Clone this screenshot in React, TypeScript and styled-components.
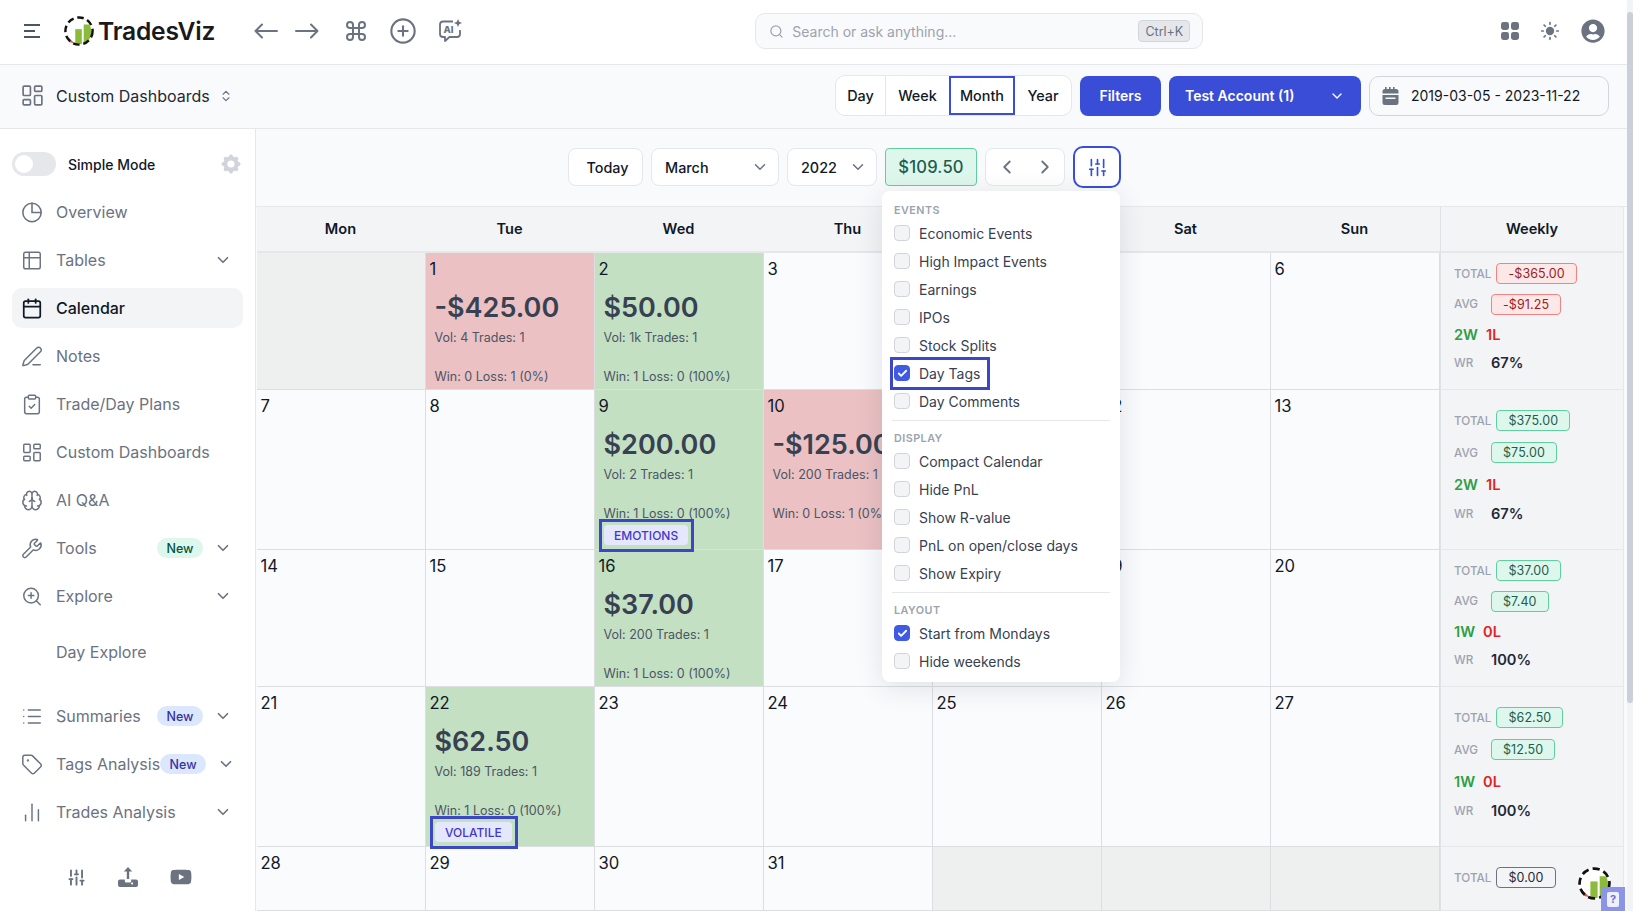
import React from 'react'
import styled, { createGlobalStyle } from 'styled-components'
import {
  Brain,
  Calendar,
  Check,
  ChevronDown,
  ChevronLeft,
  ChevronRight,
  ChevronsUpDown,
  ChartNoAxesColumn,
  CirclePlus,
  ClipboardCheck,
  Command,
  LayoutDashboard,
  List,
  PenLine,
  Search,
  SlidersVertical,
  Sun,
  Table2,
  Tag,
  Wrench,
  ZoomIn,
} from 'lucide-react'
import { FaUserCircle, FaYoutube } from 'react-icons/fa'
import { HiCog } from 'react-icons/hi'

const BLUE = '#3a4dd6'
const GREY = '#6b7280'

const GlobalStyle = createGlobalStyle`
  html, body {
    margin: 0;
    height: 100%;
    overflow: hidden;
    background: #fff;
    font-family: Inter, "Liberation Sans", sans-serif;
    color: #111827;
  }
  * {
    box-sizing: border-box;
  }
`

const Frame = styled.div`
  display: flex;
  height: 911px;
  overflow: hidden;
`

const Page = styled.div`
  flex: 1;
  min-width: 0;
  display: flex;
  flex-direction: column;
`

const ScrollRail = styled.div`
  width: 6px;
  padding-top: 12px;
  background: #f1f3f5;
`

const ScrollThumb = styled.div`
  height: 691px;
  background: #cbd0d8;
  border-radius: 3px;
`

/* top bar */
const TopBar = styled.header`
  height: 65px;
  flex: none;
  display: flex;
  align-items: center;
  padding: 0 22px 2px 24px;
  background: #fff;
  border-bottom: 1px solid #e5e7eb;
`

const Brand = styled.div`
  display: flex;
  align-items: center;
  gap: 4px;
  margin-left: 23px;
  font-size: 24.6px;
  font-weight: 600;
  letter-spacing: -0.2px;
  color: #1a1a1a;
`

const NavIcons = styled.div`
  display: flex;
  align-items: center;
  margin-left: 39px;
  color: ${GREY};
`

const IconSlot = styled.span<{ $gap?: number }>`
  display: inline-flex;
  margin-left: ${(p) => p.$gap ?? 0}px;
`

const SearchBox = styled.div`
  width: 448px;
  height: 36px;
  margin-left: 292px;
  display: flex;
  align-items: center;
  padding: 0 12px 0 13px;
  background: #f9fafb;
  border: 1px solid #e5e7eb;
  border-radius: 10px;
  color: #9ca3af;
  font-size: 14px;
`

const SearchText = styled.span`
  margin-left: 8px;
  flex: 1;
`

const Kbd = styled.span`
  height: 22px;
  padding: 0 6px;
  display: inline-flex;
  align-items: center;
  background: #e5e7eb;
  border: 1px solid #d1d5db;
  border-radius: 4px;
  color: ${GREY};
  font-size: 12.5px;
`

const RightIcons = styled.div`
  margin-left: auto;
  display: flex;
  align-items: center;
  gap: 21px;
  color: ${GREY};
`

/* second bar */
const SubBar = styled.div`
  height: 64px;
  flex: none;
  display: flex;
  align-items: center;
  padding: 0 18px 2px 20px;
  background: #f9fafb;
  border-bottom: 1px solid #e5e7eb;
`

const DashTitle = styled.div`
  display: flex;
  align-items: center;
  font-size: 16px;
  color: #1f2937;
  svg:first-child {
    color: ${GREY};
    margin-right: 11px;
  }
  svg:last-child {
    color: ${GREY};
    margin-left: 9px;
  }
`

const BarActions = styled.div`
  margin-left: auto;
  display: flex;
  align-items: center;
  gap: 8px;
`

const Segments = styled.div`
  display: flex;
  height: 41px;
  background: #fff;
  border: 1px solid #e5e7eb;
  border-radius: 10px;
  overflow: hidden;
`

const Segment = styled.div<{ $width: number; $active?: boolean; $split?: boolean }>`
  width: ${(p) => p.$width}px;
  display: flex;
  align-items: center;
  justify-content: center;
  font-size: 14.4px;
  font-weight: 500;
  color: #111827;
  border: ${(p) => (p.$active ? `2px solid ${BLUE}` : 'none')};
  border-right: ${(p) => (p.$split ? '1px solid #e5e7eb' : p.$active ? `2px solid ${BLUE}` : 'none')};
`

const PrimaryButton = styled.div<{ $width: number; $center?: boolean }>`
  width: ${(p) => p.$width}px;
  height: 40px;
  padding: 0 16px;
  display: flex;
  align-items: center;
  justify-content: ${(p) => (p.$center ? 'center' : 'space-between')};
  background: ${BLUE};
  border-radius: 8px;
  color: #fff;
  font-size: 14px;
  font-weight: 600;
`

const DateBox = styled.div`
  width: 240px;
  height: 40px;
  display: flex;
  align-items: center;
  gap: 12px;
  padding-left: 12px;
  background: #f9fafb;
  border: 1px solid #d1d5db;
  border-radius: 10px;
  font-size: 14px;
  color: #111827;
`

/* sidebar */
const Body = styled.div`
  flex: 1;
  min-height: 0;
  display: flex;
`

const Sidebar = styled.aside`
  width: 256px;
  flex: none;
  padding: 23px 12px 0;
  background: #fff;
  border-right: 1px solid #e5e7eb;
`

const ModeRow = styled.div`
  display: flex;
  align-items: center;
  height: 24px;
  margin-bottom: 16px;
  font-size: 14px;
  font-weight: 500;
  color: #111827;
`

const Toggle = styled.span`
  width: 44px;
  height: 24px;
  padding: 3px;
  margin-right: 12px;
  background: #e5e7eb;
  border-radius: 12px;
  span {
    display: block;
    width: 18px;
    height: 18px;
    background: #fff;
    border-radius: 50%;
  }
`

const Gear = styled(HiCog)`
  margin-left: auto;
  color: #d1d5db;
`

const NavList = styled.nav`
  display: flex;
  flex-direction: column;
  gap: 8px;
`

const NavItem = styled.div<{ $active?: boolean; $plain?: boolean }>`
  height: 40px;
  display: flex;
  align-items: center;
  padding: 0 11px 0 9px;
  border-radius: 10px;
  background: ${(p) => (p.$active ? '#f3f4f6' : 'transparent')};
  color: ${(p) => (p.$active ? '#111827' : GREY)};
  font-size: 16px;
  font-weight: ${(p) => (p.$active ? 500 : 400)};
  margin: ${(p) => (p.$plain ? '8px 0 16px' : '0')};
  padding-left: ${(p) => (p.$plain ? '44px' : '9px')};
  white-space: nowrap;
`

const NavIcon = styled.span`
  width: 22px;
  flex: none;
  margin-right: 13px;
  display: inline-flex;
  justify-content: center;
`

const NewBadge = styled.span<{ $tone: 'green' | 'blue' }>`
  height: 20px;
  width: 46px;
  flex: none;
  margin-left: auto;
  display: inline-flex;
  align-items: center;
  justify-content: center;
  border-radius: 10px;
  font-size: 12.5px;
  font-weight: 500;
  background: ${(p) => (p.$tone === 'green' ? '#def7ec' : '#dbe7fd')};
  color: ${(p) => (p.$tone === 'green' ? '#03543f' : '#3730a3')};
`

const Chevron = styled(ChevronDown)<{ $pushed: boolean }>`
  flex: none;
  margin-left: ${(p) => (p.$pushed ? '11px' : 'auto')};
  color: ${GREY};
`

const SideFooter = styled.div`
  display: flex;
  justify-content: center;
  align-items: center;
  gap: 32px;
  margin-top: 34px;
  color: ${GREY};
  padding-left: 3px;
`

/* calendar */
const Main = styled.main`
  flex: 1;
  min-width: 0;
  display: flex;
  flex-direction: column;
  background: #f9fafb;
`

const Toolbar = styled.div`
  height: 77px;
  flex: none;
  display: flex;
  align-items: center;
  justify-content: center;
  gap: 8px;
  padding: 0 194px 1px 0;
`

const ToolButton = styled.div<{ $width: number; $center?: boolean }>`
  width: ${(p) => p.$width}px;
  height: 38px;
  padding: 0 9px 0 13px;
  display: flex;
  align-items: center;
  justify-content: ${(p) => (p.$center ? 'center' : 'space-between')};
  background: #fff;
  border: 1px solid #e5e7eb;
  border-radius: 8px;
  font-size: 14.4px;
  font-weight: 500;
  color: #111827;
  svg {
    color: ${GREY};
  }
`

const StepButtons = styled(ToolButton)`
  padding: 0 8px 0 10px;
`

const TotalChip = styled.div`
  width: 92px;
  height: 38px;
  display: flex;
  align-items: center;
  justify-content: center;
  background: #def7ec;
  border: 1px solid #5fcf9f;
  border-radius: 4px;
  font-size: 16.6px;
  font-weight: 500;
  letter-spacing: 0.2px;
  color: #1f5d4c;
`

const OptionsAnchor = styled.div`
  position: relative;
`

const OptionsButton = styled.div`
  width: 48px;
  height: 42px;
  display: flex;
  align-items: center;
  justify-content: center;
  background: #fff;
  border: 2px solid ${BLUE};
  border-radius: 10px;
  color: ${BLUE};
`

const OptionsMenu = styled.div`
  position: absolute;
  top: 45px;
  right: 1px;
  z-index: 5;
  width: 238px;
  height: 491px;
  padding: 12px 10px 0 12px;
  background: #fff;
  border-radius: 8px;
  box-shadow: 0 6px 28px rgba(31, 41, 55, 0.12);
`

const MenuHeading = styled.div`
  height: 14px;
  display: flex;
  align-items: center;
  margin-bottom: 2px;
  font-size: 10.8px;
  font-weight: 600;
  letter-spacing: 0.45px;
  color: #9ca3af;
`

const MenuRow = styled.div`
  height: 28px;
  display: flex;
  align-items: center;
  font-size: 14px;
  color: #374151;
`

const Box = styled.span<{ $on?: boolean }>`
  width: 16px;
  height: 16px;
  flex: none;
  margin-right: 9px;
  display: inline-flex;
  align-items: center;
  justify-content: center;
  border-radius: 4px;
  background: ${(p) => (p.$on ? '#3f5be4' : '#f3f4f6')};
  border: 1px solid ${(p) => (p.$on ? '#3f5be4' : '#d1d5db')};
  color: #fff;
`

const MenuMark = styled.span`
  position: relative;
  display: flex;
  align-items: center;
  height: 100%;
  &::after {
    content: '';
    position: absolute;
    left: -4px;
    right: -10px;
    top: -2px;
    bottom: -3px;
    border: 3px solid #3b47c6;
  }
`

const MenuRule = styled.div`
  height: 1px;
  margin: 5px 0 10px -2px;
  background: #e5e7eb;
`

const Grid = styled.div`
  flex: 1;
  min-height: 0;
  display: grid;
  grid-template-columns: repeat(7, 169px) 184px;
  grid-template-rows: 46px 137px 160px 137px 160px 1fr;
  padding: 0 3px 0 1px;
  border-top: 1px solid #e5e7eb;
`

const HeadCell = styled.div<{ $weekly?: boolean }>`
  display: flex;
  align-items: center;
  justify-content: center;
  padding-right: ${(p) => (p.$weekly ? '0' : '2px')};
  background: #f3f4f6;
  border-bottom: 2px solid #e5e7eb;
  border-left: ${(p) => (p.$weekly ? '1px solid #dfe1e4' : 'none')};
  border-right: ${(p) => (p.$weekly ? '1px solid #e5e7eb' : 'none')};
  font-size: 14.6px;
  font-weight: 600;
  color: #111827;
`

const CELL_BG = { none: '#fafbfd', out: '#eef0ef', win: '#c3e0c3', loss: '#ebc1c3' }

const DayCell = styled.div<{ $kind: keyof typeof CELL_BG }>`
  position: relative;
  padding: 6px 6px 0 3.5px;
  background: ${(p) => CELL_BG[p.$kind]};
  border-right: 1px solid #dcdee1;
  border-bottom: 1px solid #dcdee1;
  min-width: 0;
`

const DayNum = styled.div`
  height: 20px;
  line-height: 20px;
  font-size: 16.6px;
  color: #111827;
`

const Pnl = styled.div`
  margin-top: 9px;
  padding-left: 5px;
  height: 40px;
  line-height: 40px;
  font-size: 27px;
  font-weight: 600;
  color: #374151;
  white-space: nowrap;
`

const Meta = styled.div<{ $gap?: number }>`
  margin-top: ${(p) => p.$gap ?? 0}px;
  padding-left: 5px;
  height: 16px;
  line-height: 16px;
  font-size: 12.5px;
  color: #4b5563;
  white-space: nowrap;
`

const TagSlot = styled.div`
  position: absolute;
  bottom: -3px;
  left: 4px;
  z-index: 2;
  padding: 3px 3px 4px 2px;
  border: 3px solid #3b47c6;
`

const TagPill = styled.div`
  height: 20px;
  padding: 0 10px;
  display: flex;
  align-items: center;
  justify-content: center;
  background: #e5e7fd;
  border-radius: 4px;
  font-size: 12px;
  font-weight: 500;
  color: #4338ca;
`

const WeekCell = styled.div<{ $tall?: boolean }>`
  background: #f3f4f6;
  border-left: 1px solid #dfe1e4;
  border-right: 1px solid #e5e7eb;
  border-bottom: 1px solid #e5e7eb;
  padding: ${(p) => (p.$tall ? '20px' : '10px')} 0 0 13px;
  display: flex;
  flex-direction: column;
  gap: ${(p) => (p.$tall ? '11px' : '9.5px')};
`

const StatRow = styled.div<{ $pull?: number }>`
  height: 21px;
  display: flex;
  align-items: center;
  margin-top: ${(p) => -(p.$pull ?? 0)}px;
`

const StatLabel = styled.span`
  min-width: 32px;
  margin-right: 5px;
  font-size: 11.7px;
  font-weight: 500;
  color: #9ca3af;
`

const MoneyPill = styled.span<{ $tone: 'up' | 'down' | 'flat' }>`
  height: 21px;
  padding: 0 11px;
  display: inline-flex;
  align-items: center;
  border-radius: 4px;
  font-size: 12.5px;
  letter-spacing: 0.1px;
  background: ${(p) => (p.$tone === 'up' ? '#def7ec' : p.$tone === 'down' ? '#fde8e8' : 'transparent')};
  border: 1px solid ${(p) => (p.$tone === 'up' ? '#5fcf9f' : p.$tone === 'down' ? '#f98080' : GREY)};
  color: ${(p) => (p.$tone === 'up' ? '#1f5d4c' : p.$tone === 'down' ? '#9b1c1c' : '#1f2937')};
`

const Wins = styled.span`
  font-size: 14.6px;
  font-weight: 600;
  color: #2f9e44;
  margin-right: 8px;
`

const Losses = styled.span`
  font-size: 14.6px;
  font-weight: 600;
  color: #e02424;
`

const RateValue = styled.span`
  font-size: 14.6px;
  font-weight: 600;
  color: #1f2937;
`

const FloatLogo = styled.div`
  position: absolute;
  left: 1578px;
  top: 867px;
  z-index: 6;
  width: 33px;
  height: 33px;
  background: #fff;
  border-radius: 50%;
`

const HelpTab = styled.div`
  position: absolute;
  left: 1601px;
  top: 887px;
  z-index: 7;
  width: 24px;
  height: 24px;
  display: flex;
  align-items: center;
  justify-content: center;
  background: #8c94e8;
  span {
    width: 12px;
    height: 15px;
    background: #eef0fd;
    border-radius: 2px;
    color: #6a72d8;
    font-size: 11px;
    font-weight: 700;
    line-height: 15px;
    text-align: center;
  }
`

function Logo({ size }: { size: number }) {
  return (
    <svg width={size} height={size} viewBox="0 0 32 32">
      <path d="M3 21 L11 29 L6 28 Z" fill="#d9534f" />
      <rect x="12" y="14" width="7" height="16" fill="#8cbb3c" />
      <path d="M21 9 h6 q3 5 2 11 q-2 7 -8 10 Z" fill="#8cbb3c" />
      <circle
        cx="16"
        cy="16"
        r="14.5"
        fill="none"
        stroke="#111"
        strokeWidth="2.6"
        strokeDasharray="7 4"
      />
    </svg>
  )
}

function MenuIcon() {
  return (
    <svg width="17" height="16" viewBox="0 0 17 16" fill="none" stroke="#4b5563" strokeWidth="2">
      <path d="M0 2h16M0 8h11M0 14h16" />
    </svg>
  )
}

function LongArrow({ right }: { right?: boolean }) {
  return (
    <svg
      width="24"
      height="24"
      viewBox="0 0 24 24"
      fill="none"
      stroke="currentColor"
      strokeWidth="2"
      strokeLinecap="round"
      strokeLinejoin="round"
    >
      <path d={right ? 'M1 12H22.5M16 5.5l6.5 6.5-6.5 6.5' : 'M23 12H1.5M8 5.5 1.5 12 8 18.5'} />
    </svg>
  )
}

function AiChat() {
  return (
    <svg width="25" height="26" viewBox="0 0 25 26" fill="none" stroke="currentColor" strokeWidth="1.8">
      <path
        d="M15 3.5H5Q2 3.5 2 6.5V16Q2 19 5 19H7V23L11.5 19H19Q22 19 22 16V12"
        strokeLinejoin="round"
      />
      <path d="M20 1l1.2 2.8L24 5l-2.8 1.2L20 9l-1.2-2.8L16 5l2.8-1.2z" fill="currentColor" stroke="none" />
      <text x="5.5" y="15" fontSize="9.5" fontWeight="800" fill="currentColor" stroke="none" fontFamily="Inter">
        AI
      </text>
    </svg>
  )
}

function OverviewPie() {
  return (
    <svg width="25" height="25" viewBox="0 0 24 24" fill="none" stroke="currentColor" strokeWidth="1.7" strokeLinecap="round">
      <circle cx="12" cy="12" r="10" />
      <path d="M12 2v10h10" />
    </svg>
  )
}

function GridDots() {
  return (
    <svg width="18" height="18" viewBox="0 0 18 18" fill="currentColor">
      <rect width="8" height="8" rx="2.4" />
      <rect x="10" width="8" height="8" rx="2.4" />
      <rect y="10" width="8" height="8" rx="2.4" />
      <rect x="10" y="10" width="8" height="8" rx="2.4" />
    </svg>
  )
}

function SolidCalendar() {
  return (
    <svg width="17" height="18" viewBox="0 0 17 18" fill={GREY}>
      <path d="M3 0h1.6v2H7V0h1.6v2H11V0h1.6v2H14a2.5 2.5 0 0 1 2.5 2.5V6.5H.5V4.5A2.5 2.5 0 0 1 3 2z" />
      <path d="M.5 8h16v7.5a2.5 2.5 0 0 1-2.5 2.5H3a2.5 2.5 0 0 1-2.5-2.5zM3.5 10.5v1.5h10v-1.5z" fillRule="evenodd" />
    </svg>
  )
}

function SolidUpload() {
  return (
    <svg width="20" height="20" viewBox="0 0 20 20" fill="currentColor">
      <path d="M10 0l4.2 4.6h-3V12H8.8V4.6h-3z" />
      <path d="M0 14.5A2 2 0 0 1 2 12.5h4.8V14a1.5 1.5 0 0 0 1.5 1.5h3.4A1.5 1.5 0 0 0 13.2 14v-1.5H18a2 2 0 0 1 2 2V18a2 2 0 0 1-2 2H2a2 2 0 0 1-2-2zM15 16.5a1 1 0 1 0 0 .01z" fillRule="evenodd" />
    </svg>
  )
}

type NavEntry = {
  label: string
  icon?: React.ReactNode
  active?: boolean
  badge?: 'green' | 'blue'
  chevron?: boolean
  plain?: boolean
}

const ICON = { size: 25, strokeWidth: 1.6 }

const NAV: NavEntry[] = [
  { label: 'Overview', icon: <OverviewPie /> },
  { label: 'Tables', icon: <Table2 {...ICON} />, chevron: true },
  { label: 'Calendar', icon: <Calendar {...ICON} color="#111827" strokeWidth={1.9} />, active: true },
  { label: 'Notes', icon: <PenLine {...ICON} /> },
  { label: 'Trade/Day Plans', icon: <ClipboardCheck {...ICON} /> },
  { label: 'Custom Dashboards', icon: <LayoutDashboard {...ICON} /> },
  { label: 'AI Q&A', icon: <Brain {...ICON} /> },
  { label: 'Tools', icon: <Wrench {...ICON} />, badge: 'green', chevron: true },
  { label: 'Explore', icon: <ZoomIn {...ICON} />, chevron: true },
  { label: 'Day Explore', plain: true },
  { label: 'Summaries', icon: <List {...ICON} />, badge: 'blue', chevron: true },
  { label: 'Tags Analysis', icon: <Tag {...ICON} />, badge: 'blue', chevron: true },
  { label: 'Trades Analysis', icon: <ChartNoAxesColumn {...ICON} />, chevron: true },
]

type Day = {
  num?: number
  kind?: 'none' | 'out' | 'win' | 'loss'
  pnl?: string
  vol?: string
  win?: string
  tag?: string
}

const WIN = 'Win: 1 Loss: 0 (100%)'
const LOSS = 'Win: 0 Loss: 1 (0%)'

const WEEKS: Day[][] = [
  [
    { kind: 'out' },
    { num: 1, kind: 'loss', pnl: '-$425.00', vol: 'Vol: 4 Trades: 1', win: LOSS },
    { num: 2, kind: 'win', pnl: '$50.00', vol: 'Vol: 1k Trades: 1', win: WIN },
    { num: 3 },
    { num: 4 },
    { num: 5 },
    { num: 6 },
  ],
  [
    { num: 7 },
    { num: 8 },
    { num: 9, kind: 'win', pnl: '$200.00', vol: 'Vol: 2 Trades: 1', win: WIN, tag: 'EMOTIONS' },
    { num: 10, kind: 'loss', pnl: '-$125.00', vol: 'Vol: 200 Trades: 1', win: LOSS },
    { num: 11 },
    { num: 12 },
    { num: 13 },
  ],
  [
    { num: 14 },
    { num: 15 },
    { num: 16, kind: 'win', pnl: '$37.00', vol: 'Vol: 200 Trades: 1', win: WIN },
    { num: 17 },
    { num: 18 },
    { num: 19 },
    { num: 20 },
  ],
  [
    { num: 21 },
    { num: 22, kind: 'win', pnl: '$62.50', vol: 'Vol: 189 Trades: 1', win: WIN, tag: 'VOLATILE' },
    { num: 23 },
    { num: 24 },
    { num: 25 },
    { num: 26 },
    { num: 27 },
  ],
  [
    { num: 28 },
    { num: 29 },
    { num: 30 },
    { num: 31 },
    { kind: 'out' },
    { kind: 'out' },
    { kind: 'out' },
  ],
]

const SUMMARY = [
  { total: '-$365.00', avg: '-$91.25', w: '2W', l: '1L', rate: '67%', tone: 'down' as const },
  { total: '$375.00', avg: '$75.00', w: '2W', l: '1L', rate: '67%', tone: 'up' as const, tall: true },
  { total: '$37.00', avg: '$7.40', w: '1W', l: '0L', rate: '100%', tone: 'up' as const },
  { total: '$62.50', avg: '$12.50', w: '1W', l: '0L', rate: '100%', tone: 'up' as const, tall: true },
]

const MENU = [
  {
    title: 'EVENTS',
    rows: [
      { label: 'Economic Events' },
      { label: 'High Impact Events' },
      { label: 'Earnings' },
      { label: 'IPOs' },
      { label: 'Stock Splits' },
      { label: 'Day Tags', on: true, marked: true },
      { label: 'Day Comments' },
    ],
  },
  {
    title: 'DISPLAY',
    rows: [
      { label: 'Compact Calendar' },
      { label: 'Hide PnL' },
      { label: 'Show R-value' },
      { label: 'PnL on open/close days' },
      { label: 'Show Expiry' },
    ],
  },
  {
    title: 'LAYOUT',
    rows: [{ label: 'Start from Mondays', on: true }, { label: 'Hide weekends' }],
  },
]

export default function App() {
  return (
    <Frame>
      <GlobalStyle />
      <Page>
        <TopBar>
          <MenuIcon />
          <Brand>
            <Logo size={30} />
            TradesViz
          </Brand>
          <NavIcons>
            <LongArrow />
            <IconSlot $gap={17}>
              <LongArrow right />
            </IconSlot>
            <IconSlot $gap={25}>
              <Command size={24} strokeWidth={2} />
            </IconSlot>
            <IconSlot $gap={21}>
              <CirclePlus size={28} strokeWidth={1.8} />
            </IconSlot>
            <IconSlot $gap={21}>
              <AiChat />
            </IconSlot>
          </NavIcons>
          <SearchBox>
            <Search size={15} />
            <SearchText>Search or ask anything...</SearchText>
            <Kbd>Ctrl+K</Kbd>
          </SearchBox>
          <RightIcons>
            <GridDots />
            <Sun size={20} fill={GREY} />
            <FaUserCircle size={24} />
          </RightIcons>
        </TopBar>

        <SubBar>
          <DashTitle>
            <LayoutDashboard size={25} strokeWidth={1.6} />
            Custom Dashboards
            <ChevronsUpDown size={14} />
          </DashTitle>
          <BarActions>
            <Segments>
              <Segment $width={50} $split>Day</Segment>
              <Segment $width={63}>Week</Segment>
              <Segment $width={66} $active>Month</Segment>
              <Segment $width={56}>Year</Segment>
            </Segments>
            <PrimaryButton $width={81} $center>Filters</PrimaryButton>
            <PrimaryButton $width={192}>
              Test Account (1)
              <ChevronDown size={16} />
            </PrimaryButton>
            <DateBox>
              <SolidCalendar />
              2019-03-05 - 2023-11-22
            </DateBox>
          </BarActions>
        </SubBar>

        <Body>
          <Sidebar>
            <ModeRow>
              <Toggle>
                <span />
              </Toggle>
              Simple Mode
              <Gear size={24} />
            </ModeRow>
            <NavList>
              {NAV.map((item) => (
                <NavItem key={item.label} $active={item.active} $plain={item.plain}>
                  {item.icon && <NavIcon>{item.icon}</NavIcon>}
                  {item.label}
                  {item.badge && <NewBadge $tone={item.badge}>New</NewBadge>}
                  {item.chevron && <Chevron size={18} strokeWidth={2.2} $pushed={!!item.badge} />}
                </NavItem>
              ))}
            </NavList>
            <SideFooter>
              <SlidersVertical size={19} strokeWidth={2.4} />
              <SolidUpload />
              <FaYoutube size={22} />
            </SideFooter>
          </Sidebar>

          <Main>
            <Toolbar>
              <ToolButton $width={75} $center>
                Today
              </ToolButton>
              <ToolButton $width={128}>
                March
                <ChevronDown size={18} />
              </ToolButton>
              <ToolButton $width={90}>
                2022
                <ChevronDown size={18} />
              </ToolButton>
              <TotalChip>$109.50</TotalChip>
              <StepButtons $width={80}>
                <ChevronLeft size={22} />
                <ChevronRight size={22} />
              </StepButtons>
              <OptionsAnchor>
                <OptionsButton>
                  <SlidersVertical size={21} strokeWidth={1.9} />
                </OptionsButton>
                <OptionsMenu>
                  {MENU.map((section, i) => (
                    <React.Fragment key={section.title}>
                      {i > 0 && <MenuRule />}
                      <MenuHeading>{section.title}</MenuHeading>
                      {section.rows.map((row) => {
                        const content = (
                          <>
                            <Box $on={row.on}>{row.on && <Check size={11} strokeWidth={4} />}</Box>
                            {row.label}
                          </>
                        )
                        return (
                          <MenuRow key={row.label}>
                            {'marked' in row ? <MenuMark>{content}</MenuMark> : content}
                          </MenuRow>
                        )
                      })}
                    </React.Fragment>
                  ))}
                </OptionsMenu>
              </OptionsAnchor>
            </Toolbar>

            <Grid>
              {['Mon', 'Tue', 'Wed', 'Thu', 'Fri', 'Sat', 'Sun'].map((d) => (
                <HeadCell key={d}>{d}</HeadCell>
              ))}
              <HeadCell $weekly>Weekly</HeadCell>
              {WEEKS.map((week, w) => (
                <React.Fragment key={w}>
                  {week.map((day, i) => (
                    <DayCell key={i} $kind={day.kind ?? 'none'}>
                      {day.num && <DayNum>{day.num}</DayNum>}
                      {day.pnl && (
                        <>
                          <Pnl>{day.pnl}</Pnl>
                          <Meta $gap={2}>{day.vol}</Meta>
                          <Meta $gap={23}>{day.win}</Meta>
                        </>
                      )}
                      {day.tag && (
                        <TagSlot>
                          <TagPill>{day.tag}</TagPill>
                        </TagSlot>
                      )}
                    </DayCell>
                  ))}
                  {SUMMARY[w] ? (
                    <WeekCell $tall={SUMMARY[w].tall}>
                      <StatRow>
                        <StatLabel>TOTAL</StatLabel>
                        <MoneyPill $tone={SUMMARY[w].tone}>{SUMMARY[w].total}</MoneyPill>
                      </StatRow>
                      <StatRow>
                        <StatLabel>AVG</StatLabel>
                        <MoneyPill $tone={SUMMARY[w].tone}>{SUMMARY[w].avg}</MoneyPill>
                      </StatRow>
                      <StatRow>
                        <Wins>{SUMMARY[w].w}</Wins>
                        <Losses>{SUMMARY[w].l}</Losses>
                      </StatRow>
                      <StatRow $pull={SUMMARY[w].tall ? 3 : 2}>
                        <StatLabel>WR</StatLabel>
                        <RateValue>{SUMMARY[w].rate}</RateValue>
                      </StatRow>
                    </WeekCell>
                  ) : (
                    <WeekCell $tall>
                      <StatRow>
                        <StatLabel>TOTAL</StatLabel>
                        <MoneyPill $tone="flat">$0.00</MoneyPill>
                      </StatRow>
                    </WeekCell>
                  )}
                </React.Fragment>
              ))}
            </Grid>
          </Main>
        </Body>
      </Page>
      <ScrollRail>
        <ScrollThumb />
      </ScrollRail>
      <FloatLogo>
        <Logo size={33} />
      </FloatLogo>
      <HelpTab>
        <span>?</span>
      </HelpTab>
    </Frame>
  )
}
